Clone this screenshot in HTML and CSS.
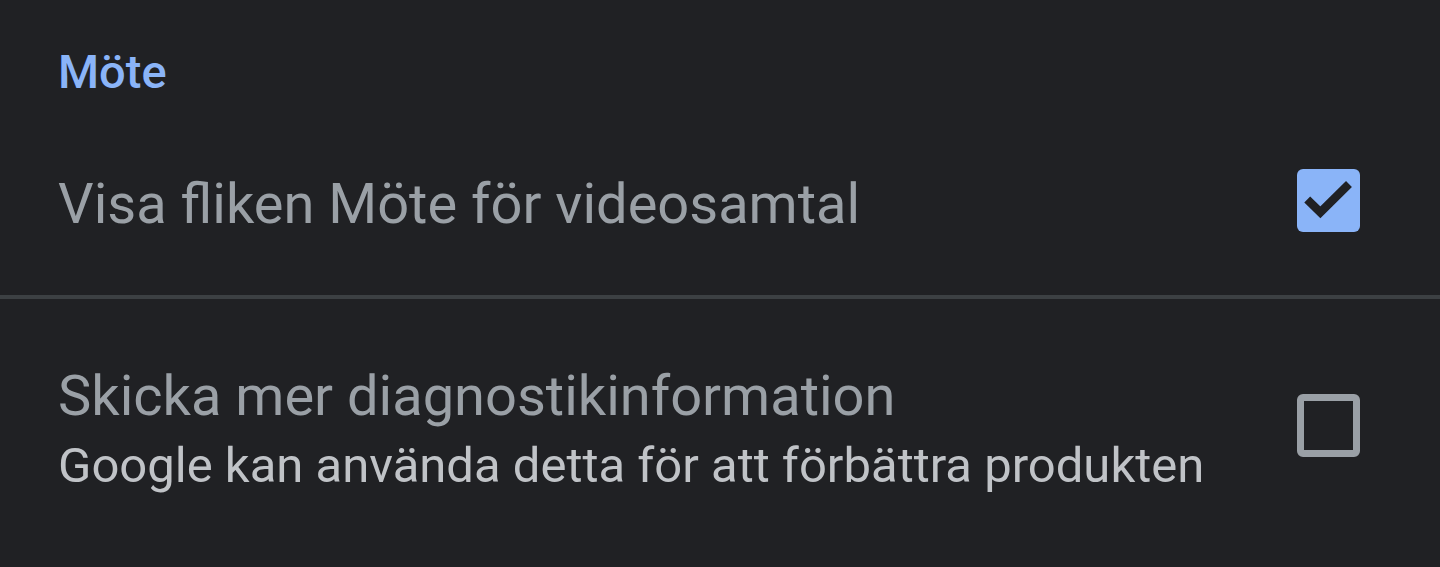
FILE: index.html
```html
<!DOCTYPE html>
<html lang="sv">
  <head>
    <meta charset="UTF-8" />
    <meta name="viewport" content="width=device-width, initial-scale=1.0" />
    <title>Möte</title>
    <link rel="stylesheet" href="styles.css">
  </head>
  <body>
    <section class="settings">
      <h2 class="section-title">Möte</h2>

      <div class="setting-row row-single">
        <div class="setting-text">
          <div class="setting-label">Visa fliken Möte för videosamtal</div>
        </div>
        <span class="checkbox checked">
          <svg viewBox="0 0 24 24" width="63" height="63">
            <path d="M3.9 11.6 L8.9 16.5 L19.8 5.7" fill="none" stroke="#202124" stroke-width="3.2" />
          </svg>
        </span>
      </div>

      <hr class="divider" />

      <div class="setting-row row-double">
        <div class="setting-text">
          <div class="setting-label">Skicka mer diagnostikinformation</div>
          <div class="setting-summary">Google kan använda detta för att förbättra produkten</div>
        </div>
        <span class="checkbox"></span>
      </div>
    </section>
  </body>
</html>
```

FILE: styles.css
```css
/* General */
html,
body {
  margin: 0;
  padding: 0;
  height: 100%;
  background-color: #202124;
}

body {
  font-family: Roboto, "Noto Sans", Arial, sans-serif;
  overflow: hidden;
}

/* Section title */
.section-title {
  margin: 0;
  padding: 45px 58px 0;
  font-size: 47px;
  line-height: 54px;
  font-weight: 500;
  color: #8ab4f8;
}

/* Rows */
.setting-row {
  display: flex;
  align-items: center;
  justify-content: space-between;
  padding: 0 80px 0 58px;
}

.row-single {
  height: 183px;
  padding-top: 13px;
}

.row-single .checkbox {
  margin-bottom: 6px;
}

.row-double {
  padding-top: 61px;
}

.row-double .checkbox {
  margin-bottom: 9px;
}

.setting-label {
  font-size: 56px;
  line-height: 72px;
  color: #9aa0a6;
}

.row-single .setting-label {
  line-height: 66px;
}

.setting-summary {
  font-size: 49px;
  line-height: 68px;
  color: #c0c3c7;
}

/* Divider */
.divider {
  margin: 0;
  border: none;
  height: 4px;
  background-color: #3c4043;
}

/* Checkbox */
.checkbox {
  box-sizing: border-box;
  width: 63px;
  height: 63px;
  border: 7px solid #9aa0a6;
  border-radius: 6px;
  flex-shrink: 0;
}

.checkbox.checked {
  border: none;
  background-color: #8ab4f8;
}

.checkbox svg {
  display: block;
}
```
